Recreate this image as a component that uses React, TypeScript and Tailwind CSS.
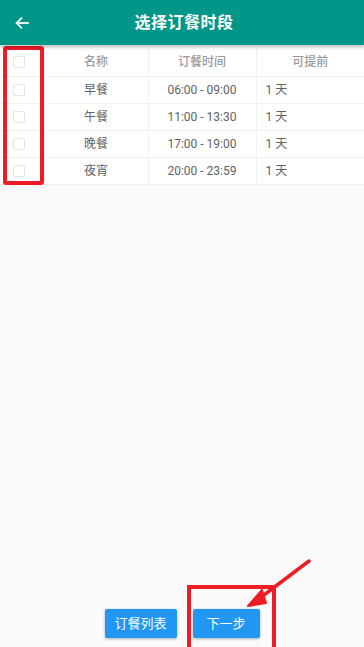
import React from 'react';

const rows = [
  { name: '早餐', time: '06:00 - 09:00', ahead: '1 天' },
  { name: '午餐', time: '11:00 - 13:30', ahead: '1 天' },
  { name: '晚餐', time: '17:00 - 19:00', ahead: '1 天' },
  { name: '夜宵', time: '20:00 - 23:59', ahead: '1 天' },
];

const Box: React.FC = () => (
  <span className="block w-[12px] h-[12px] rounded-[2px] border border-[#e3e3e8] bg-white" />
);

const App: React.FC = () => {
  return (
    <div
      className="relative w-[364px] h-[647px] overflow-hidden bg-[#fafafa] flex flex-col"
      style={{ fontFamily: 'Roboto, "Noto Sans CJK SC", sans-serif' }}
    >
      <header className="relative z-10 h-[45px] shrink-0 bg-[#009688] flex items-center shadow-[0_2px_4px_rgba(0,0,0,0.25)]">
        <button className="w-[44px] h-full flex items-center justify-center text-white">
          <svg width="16" height="16" viewBox="0 0 24 24" fill="none" stroke="currentColor" strokeWidth="2.6" strokeLinecap="square">
            <path d="M21 12H4" />
            <path d="M11 5l-7 7 7 7" />
          </svg>
        </button>
        <h1 className="flex-1 text-center pr-[40px] text-white text-[16px] font-bold tracking-[0.5px]">选择订餐时段</h1>
      </header>

      <div className="mt-[3px] bg-white">
        <table className="w-full border-collapse text-[12px] text-[#606266]">
          <thead>
            <tr className="h-[28px] border-b border-[#f0f0f5]">
              <th className="w-[44px] border-r border-[#f0f0f5] pl-[13px]"><Box /></th>
              <th className="w-[104px] border-r border-[#f0f0f5] font-medium text-[#999999]">名称</th>
              <th className="w-[108px] border-r border-[#f0f0f5] font-medium text-[#999999]">订餐时间</th>
              <th className="font-medium text-[#999999]">可提前</th>
            </tr>
          </thead>
          <tbody>
            {rows.map((r) => (
              <tr key={r.name} className="h-[27px] border-b border-[#f0f0f5]">
                <td className="border-r border-[#f0f0f5] pl-[13px]"><Box /></td>
                <td className="border-r border-[#f0f0f5] text-center">{r.name}</td>
                <td className="border-r border-[#f0f0f5] text-center">{r.time}</td>
                <td className="pl-[9px]">{r.ahead}</td>
              </tr>
            ))}
          </tbody>
        </table>
      </div>

      <div className="flex-1" />

      <div className="flex justify-center gap-[16px] pb-[9px]">
        <button className="w-[72px] h-[29px] rounded-[2px] bg-[#2196f3] text-white text-[13px] shadow-[0_1px_3px_rgba(0,0,0,0.3)]">订餐列表</button>
        <button className="w-[67px] h-[29px] rounded-[2px] bg-[#2196f3] text-white text-[13px] shadow-[0_1px_3px_rgba(0,0,0,0.3)]">下一步</button>
      </div>

      {/* annotation marks */}
      <div className="absolute left-[3px] top-[46px] w-[41px] h-[139px] border-[4px] border-[#ee1c25] rounded-[3px] pointer-events-none" />
      <div className="absolute left-[187px] top-[585px] w-[89px] h-[66px] border-[4px] border-[#ee1c25] pointer-events-none" />
      <svg className="absolute left-0 top-0 pointer-events-none" width="364" height="647">
        <line x1="309" y1="561" x2="256" y2="601" stroke="#ee1c25" strokeWidth="3.5" strokeLinecap="round" />
        <path d="M248 606 L262 590 L266 603 Z" fill="#ee1c25" stroke="#ee1c25" strokeWidth="2" strokeLinejoin="round" />
      </svg>
    </div>
  );
};

export default App;
